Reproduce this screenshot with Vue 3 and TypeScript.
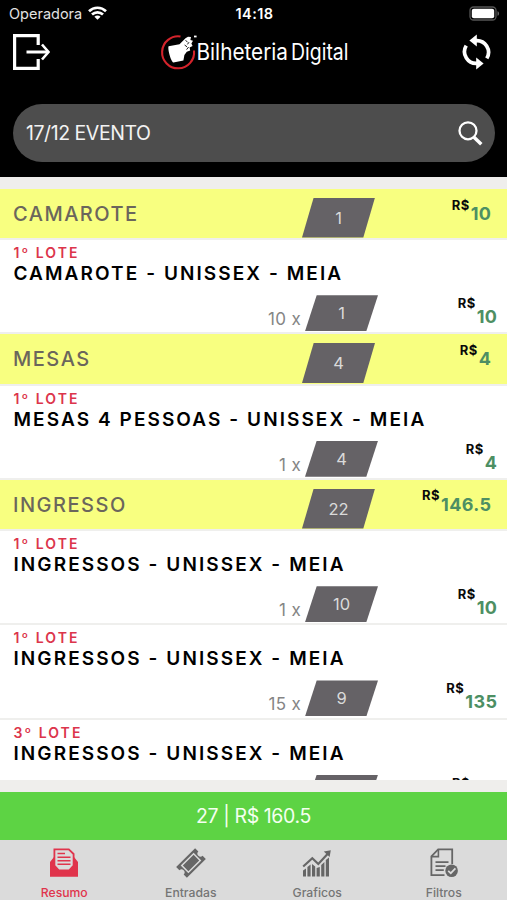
<script setup lang="ts">
interface Lot {
  lot: string
  name: string
  multiplier: number
  sold: number
  total: string
}

interface Sector {
  name: string
  sold: number
  total: string
  lots: Lot[]
}

const sectors: Sector[] = [
  {
    name: 'CAMAROTE',
    sold: 1,
    total: '10',
    lots: [{ lot: '1º LOTE', name: 'CAMAROTE - UNISSEX - MEIA', multiplier: 10, sold: 1, total: '10' }],
  },
  {
    name: 'MESAS',
    sold: 4,
    total: '4',
    lots: [{ lot: '1º LOTE', name: 'MESAS 4 PESSOAS - UNISSEX - MEIA', multiplier: 1, sold: 4, total: '4' }],
  },
  {
    name: 'INGRESSO',
    sold: 22,
    total: '146.5',
    lots: [
      { lot: '1º LOTE', name: 'INGRESSOS - UNISSEX - MEIA', multiplier: 1, sold: 10, total: '10' },
      { lot: '1º LOTE', name: 'INGRESSOS - UNISSEX - MEIA', multiplier: 15, sold: 9, total: '135' },
      { lot: '3º LOTE', name: 'INGRESSOS - UNISSEX - MEIA', multiplier: 1, sold: 3, total: '1.5' },
    ],
  },
]
</script>

<template>
  <div class="screen">
    <header class="top">
      <div class="status">
        <div class="carrier">
          <span>Operadora</span>
          <svg class="wifi" width="19" height="14" viewBox="0 0 19 14">
            <g fill="none" stroke="#fff" stroke-width="2.7">
              <path d="M1 5.2C5.8.6 13.2.6 18 5.2" />
              <path d="M4 8.6C7.2 5.6 11.8 5.6 15 8.6" />
            </g>
            <path d="M9.5 13.8 6.4 10.7C8.2 9.2 10.8 9.2 12.6 10.7Z" fill="#fff" />
          </svg>
        </div>
        <div class="clock">14:18</div>
        <div class="power">
          <svg width="31" height="15" viewBox="0 0 31 15">
            <rect x="1" y="1" width="26" height="13" rx="3.5" fill="none" stroke="#555" stroke-width="1.3" />
            <rect x="2.8" y="2.8" width="22.4" height="9.4" rx="2" fill="#fff" />
            <path d="M28.5 5.2C30.6 5.8 30.6 9.2 28.5 9.8Z" fill="#666" />
          </svg>
        </div>
      </div>

      <div class="bar">
        <svg class="exit" width="37" height="36" viewBox="0 0 37 36" fill="none" stroke="#fff">
          <path d="M25.2 11V1.6H1.6V34.4H25.2V25" stroke-width="3.2" />
          <path d="M13.5 18H35" stroke-width="3" />
          <path d="M29 10.5 35.5 18 29 25.5" stroke-width="2.6" />
        </svg>
        <svg class="logo" width="190" height="38" viewBox="0 0 190 38">
          <path d="M19.5 3.5A16 16 0 1 0 33 17.5" fill="none" stroke="#d3232b" stroke-width="2.1" />
          <path
            d="M7.6 13.2 18.5 11.2 24.5 5.2 27 3.8 30 4 29.4 7 32 7.8 30.4 10.4 31.6 13 28.6 14.4 29.2 17.4 25.8 18.8 23.4 22 22.4 27.6 12.4 29.4C9.8 28.6 6.4 15 7.6 13.2Z"
            fill="#fff"
          />
          <path d="M24.5 7.5l2 1.4M28 9.2l-1.6 2.2M23.6 12l2.4 1.8M27.6 14l-2 2.6" stroke="#000" stroke-width=".9" />
          <rect x="33" y="2.6" width="2.6" height="1.8" fill="#fff" />
          <text x="35.5" y="27" textLength="91.5" lengthAdjust="spacingAndGlyphs" class="brand">Bilheteria</text>
          <text x="130" y="27" textLength="57.5" lengthAdjust="spacingAndGlyphs" class="brand">Digital</text>
        </svg>
        <svg class="sync" width="29" height="36" viewBox="0 0 29 36">
          <g fill="none" stroke="#fff" stroke-width="3.7">
            <path d="M13.5 6.6A11.8 11.8 0 0 1 24.8 24.4" />
            <path d="M15.5 29.4A11.8 11.8 0 0 1 4.2 11.6" />
          </g>
          <path d="M14.8.4V12.6L7.4 6.5Z" fill="#fff" />
          <path d="M14.2 35.6V23.4L21.6 29.5Z" fill="#fff" />
        </svg>
      </div>

      <div class="search">
        <span>17/12 EVENTO</span>
        <svg width="25" height="25" viewBox="0 0 25 25" fill="none" stroke="#fff">
          <circle cx="10" cy="9.8" r="8.5" stroke-width="2.3" />
          <path d="M16 16.2 23.3 23.2" stroke-width="3.5" />
        </svg>
      </div>
    </header>

    <main class="list">
      <template v-for="sector in sectors" :key="sector.name">
        <div class="sector">
          <h2>{{ sector.name }}</h2>
          <div class="badge"><span>{{ sector.sold }}</span></div>
          <div class="price"><small>R$</small><b>{{ sector.total }}</b></div>
        </div>
        <div v-for="(lot, i) in sector.lots" :key="i" class="lot">
          <div class="lot-tag">{{ lot.lot }}</div>
          <div class="lot-name">{{ lot.name }}</div>
          <div class="lot-row">
            <div class="times">{{ lot.multiplier }} x</div>
            <div class="badge"><span>{{ lot.sold }}</span></div>
            <div class="price"><small>R$</small><b>{{ lot.total }}</b></div>
          </div>
        </div>
      </template>
    </main>

    <div class="total">27 | R$ 160.5</div>

    <nav class="tabs">
      <div class="tab active">
        <svg width="30" height="30" viewBox="0 0 30 30">
          <path d="M1 14 5 9V17L10 23H20L25 17V9L29 14V28.8H1Z" fill="currentColor" />
          <path d="M5.4 17.5V1.3H19.8L24.6 6V17.5L20 22.5H10Z" fill="#dbdbdb" stroke="currentColor" stroke-width="1.8" />
          <path d="M8.5 5.6H16M8.5 9.2H21.5M8.5 12.8H21.5M8.5 16.2H21.5" stroke="currentColor" stroke-width="1.5" />
        </svg>
        <span>Resumo</span>
      </div>
      <div class="tab">
        <svg width="30" height="30" viewBox="0 0 30 30">
          <g transform="rotate(-45 15 15)">
            <path
              d="M1.6 7.4H28.4V12A3 3 0 0 0 28.4 18V22.6H1.6V18A3 3 0 0 0 1.6 12Z"
              fill="currentColor"
            />
            <rect x="6.6" y="10.3" width="16.8" height="9.4" fill="none" stroke="#dbdbdb" stroke-width="1.5" />
          </g>
        </svg>
        <span>Entradas</span>
      </div>
      <div class="tab">
        <svg width="30" height="30" viewBox="0 0 30 30">
          <path
            d="M1 22.5 4 20.5V28.4H1ZM5.4 19 8.6 16.5V28.4H5.4ZM10 16 13.2 18.5V28.4H10ZM14.6 20 17.8 19V28.4H14.6ZM19.2 17 22.4 14V28.4H19.2ZM23.8 12 27 9.5V28.4H23.8Z"
            fill="currentColor"
          />
          <path d="M1.2 18.5 10.3 10.3 16.3 16 26 5.6" fill="none" stroke="currentColor" stroke-width="2.2" />
          <path d="M21.8 3.4 28.8 2.2 27.6 9Z" fill="currentColor" />
        </svg>
        <span>Graficos</span>
      </div>
      <div class="tab">
        <svg width="30" height="30" viewBox="0 0 30 30">
          <path
            d="M15.5 27.2H2.4V8.4L9.2 1.3H23.2V16"
            fill="none"
            stroke="currentColor"
            stroke-width="1.8"
          />
          <path d="M9.4 1.8V8.6H2.8" fill="none" stroke="currentColor" stroke-width="1.6" />
          <path d="M6.5 14.2H19.5M6.5 18.2H16.5M6.5 22.2H14.8" stroke="currentColor" stroke-width="1.8" />
          <circle cx="22.6" cy="22.8" r="6.3" fill="currentColor" />
          <path d="M19.2 22.8 21.8 25.2 26.4 20.4" fill="none" stroke="#dbdbdb" stroke-width="1.7" />
        </svg>
        <span>Filtros</span>
      </div>
    </nav>
  </div>
</template>

<style>
body {
  margin: 0;
  background: #efeeec;
}
</style>

<style scoped>
.screen {
  width: 507px;
  height: 900px;
  display: flex;
  flex-direction: column;
  overflow: hidden;
  background: #efeeec;
  font-family: Inter, "Liberation Sans", sans-serif;
}
.top {
  flex: none;
  height: 177px;
  box-sizing: border-box;
  background: #000;
  color: #fff;
}
.status {
  display: grid;
  grid-template-columns: 1fr auto 1fr;
  align-items: center;
  height: 26px;
  padding: 0 7px 0 9px;
}
.carrier {
  display: flex;
  align-items: center;
  gap: 6px;
  font-size: 14.5px;
  color: #e2e2e2;
}
.clock {
  font-size: 14.5px;
  font-weight: 600;
  letter-spacing: 0.4px;
}
.power {
  display: flex;
  justify-content: flex-end;
}
.bar {
  display: flex;
  justify-content: space-between;
  align-items: center;
  height: 52px;
  padding: 0 16px 0 13px;
}
.logo {
  overflow: visible;
}
.brand {
  font-family: Inter, "Open Sans", sans-serif;
  font-size: 22.5px;
  fill: #fff;
}
.search {
  display: flex;
  justify-content: space-between;
  align-items: center;
  height: 58px;
  margin: 26px 12px 0 13px;
  padding: 0 12px 0 13px;
  border-radius: 29px;
  background: #4d4d4d;
  color: #f2f2f2;
  font-size: 19.5px;
  letter-spacing: -0.45px;
}
.list {
  flex: none;
  height: 591px;
  margin-top: 12px;
  overflow: hidden;
}
.sector {
  display: grid;
  grid-template-columns: 289px 73px 1fr;
  height: 51.3px;
  box-sizing: border-box;
  padding: 0 16px 0 13px;
  border-bottom: 2.3px solid #efefed;
  background: #f8ff80;
}
.sector h2 {
  margin: 0;
  font-size: 20px;
  font-weight: 500;
  line-height: 50px;
  letter-spacing: 1.5px;
  color: #6b665c;
}
.badge {
  display: flex;
  justify-content: center;
  align-items: center;
  width: 73px;
  height: 36px;
  clip-path: polygon(16% 0, 100% 0, 84% 100%, 0 100%);
  background: #656266;
  color: #dadada;
  font-size: 16.5px;
}
.sector .badge {
  height: 40px;
  margin-top: 8.6px;
}
.price {
  display: flex;
  justify-content: flex-end;
  gap: 1px;
  line-height: 20px;
}
.price small {
  font-size: 13px;
  font-weight: 700;
  letter-spacing: 0.5px;
  color: #0a0a0a;
}
.price b {
  font-size: 18px;
  font-weight: 700;
  letter-spacing: 0.35px;
  margin-right: -0.3px;
  color: #4d8f63;
}
.sector .price small {
  margin-top: 5.5px;
}
.sector .price b {
  margin-top: 15px;
}
.lot {
  height: 94.2px;
  box-sizing: border-box;
  padding: 4px 10px 0 13.5px;
  border-bottom: 2.3px solid #efefed;
  background: #fff;
}
.lot-tag {
  font-size: 14px;
  font-weight: 600;
  line-height: 18px;
  letter-spacing: 2.05px;
  color: #dc354b;
}
.lot-name {
  padding-top: 1px;
  font-size: 19px;
  font-weight: 600;
  line-height: 22px;
  letter-spacing: 2.08px;
  white-space: nowrap;
  color: #000;
}
.lot-row {
  display: grid;
  grid-template-columns: 287.5px 73px 1fr;
  column-gap: 4px;
  margin-top: 10px;
}
.times {
  padding-top: 13px;
  text-align: right;
  font-size: 17px;
  line-height: 22px;
  letter-spacing: 0.3px;
  color: #858585;
}
.lot .price small {
  margin-top: -2px;
}
.lot .price b {
  margin-top: 12px;
}
.total {
  flex: none;
  height: 48px;
  margin-top: 12px;
  background: #5dd344;
  color: #f4fff0;
  font-size: 19.5px;
  line-height: 49px;
  letter-spacing: -0.4px;
  text-align: center;
}
.tabs {
  flex: 1;
  display: grid;
  grid-template-columns: repeat(4, 1fr);
  padding-left: 1px;
  background: #dbdbdb;
}
.tab {
  display: flex;
  flex-direction: column;
  align-items: center;
  padding-top: 8px;
  color: #666;
  font-size: 12.2px;
  font-weight: 500;
  line-height: 15px;
}
.tab span {
  margin-top: 7px;
  color: #757575;
}
.tab.active,
.tab.active span {
  color: #e0344c;
}
</style>
